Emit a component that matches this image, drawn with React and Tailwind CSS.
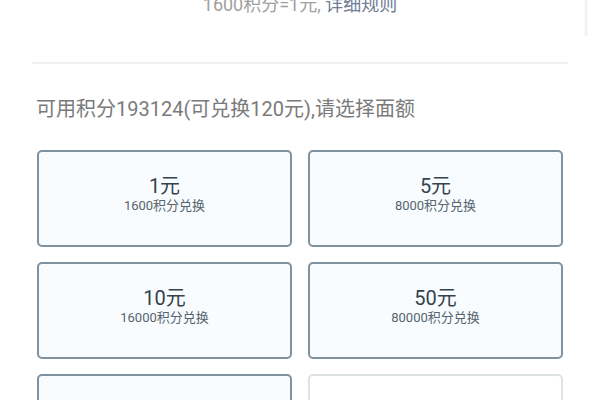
import React from "react";

const cards = [
  { t: "1元", s: "1600积分兑换" },
  { t: "5元", s: "8000积分兑换" },
  { t: "10元", s: "16000积分兑换" },
  { t: "50元", s: "80000积分兑换" },
  { t: "100元", s: "160000积分兑换" },
  { t: "500元", s: "800000积分兑换", disabled: true },
];

export default function App() {
  return (
    <div
      className="relative w-[600px] h-[400px] overflow-hidden bg-white"
      style={{ fontFamily: '"Roboto", "Noto Sans CJK SC", sans-serif' }}
    >
      <div className="absolute right-[12px] top-0 w-[4px] h-[36px] bg-gradient-to-r from-white via-[#eeeeee] to-white" />
      <div className="flex justify-center mt-[-6px] h-[22px] text-[18px] leading-[22px] text-[#a0a0a0]">
        <span>1600积分=1元,&nbsp;</span>
        <span className="text-[#6f7d96]">详细规则</span>
      </div>
      <div className="mx-[32px] mt-[46px] h-[2px] bg-[#f0f0f0]" />
      <div className="mt-[32px] ml-[36px] text-[20px] leading-[26px] text-[#7a7a7a]">
        可用积分193124(可兑换120元),请选择面额
      </div>
      <div className="grid grid-cols-2 gap-x-[16px] gap-y-[15px] ml-[37px] mr-[37px] mt-[28px]">
        {cards.map((c, i) => (
          <div
            key={i}
            className={
              c.disabled
                ? "h-[97px] rounded-[5px] border-2 border-[#dde2e5] bg-white flex flex-col items-center pt-[24px]"
                : "h-[97px] rounded-[5px] border-2 border-[#7f929d] bg-[#f8fcfe] flex flex-col items-center pt-[24px]"
            }
          >
            <div
              className={
                c.disabled
                  ? "text-[20px] leading-[20px] text-[#c9ced2]"
                  : "text-[20px] leading-[20px] text-[#36424c]"
              }
            >
              {c.t}
            </div>
            <div
              className={
                c.disabled
                  ? "mt-[1px] text-[13px] leading-[18px] text-[#c9ced2]"
                  : "mt-[1px] text-[13px] leading-[18px] text-[#56646f]"
              }
            >
              {c.s}
            </div>
          </div>
        ))}
      </div>
    </div>
  );
}
